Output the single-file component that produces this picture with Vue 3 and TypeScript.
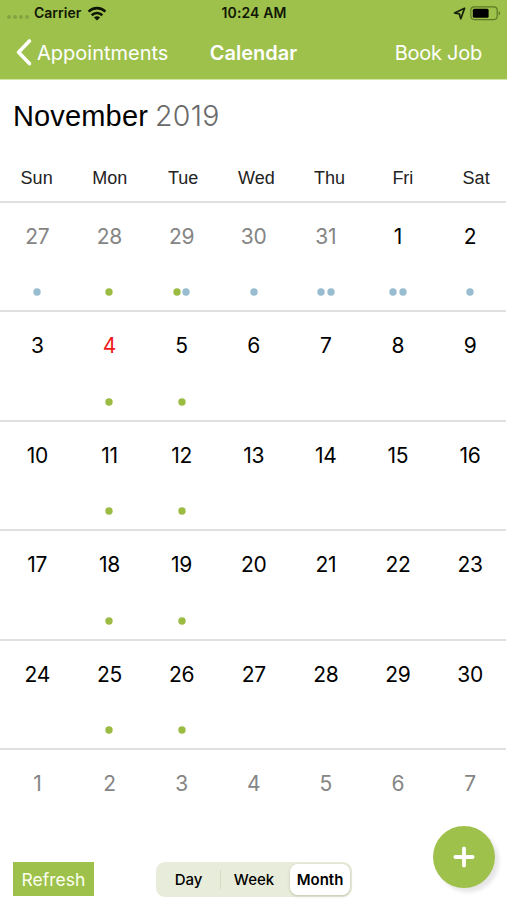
<script setup lang="ts">
interface Day {
  label: number
  tone?: 'muted' | 'today'
  dots?: Array<'green' | 'blue'>
}

const weekdays: string[] = ['Sun', 'Mon', 'Tue', 'Wed', 'Thu', 'Fri', 'Sat']

const week = (start: number): Day[] =>
  Array.from({ length: 7 }, (_, i) => ({
    label: start + i,
    tone: start + i === 4 ? 'today' : undefined,
    dots: i === 1 || i === 2 ? ['green'] : [],
  }))

const weeks: Day[][] = [
  [
    { label: 27, tone: 'muted', dots: ['blue'] },
    { label: 28, tone: 'muted', dots: ['green'] },
    { label: 29, tone: 'muted', dots: ['green', 'blue'] },
    { label: 30, tone: 'muted', dots: ['blue'] },
    { label: 31, tone: 'muted', dots: ['blue', 'blue'] },
    { label: 1, dots: ['blue', 'blue'] },
    { label: 2, dots: ['blue'] },
  ],
  week(3),
  week(10),
  week(17),
  week(24),
  [1, 2, 3, 4, 5, 6, 7].map((label): Day => ({ label, tone: 'muted' })),
]

const views: string[] = ['Day', 'Week', 'Month']
const active = 'Month'
</script>

<template>
  <main class="screen">
    <header class="top">
      <div class="status">
        <div class="carrier">
          <span class="signal"><i v-for="n in 4" :key="n" /></span>
          <span class="carrier-name">Carrier</span>
          <svg class="wifi" width="20" height="15" viewBox="0 0 20 15" fill="none" stroke="#0d1404" stroke-width="2.6">
            <path d="M1.6 5.600a12 12 0 0 1 16.800 0" />
            <path d="M4.700 9.200a7.600 7.600 0 0 1 10.600 0" />
            <path d="M10 14.600 6.900 11.500a4.400 4.400 0 0 1 6.200 0z" fill="#0d1404" stroke="none" />
          </svg>
        </div>
        <span class="time">10:24 AM</span>
        <div class="power">
          <svg width="13" height="13" viewBox="0 0 13 13" fill="none" stroke="#16200a" stroke-width="1.7" stroke-linejoin="round">
            <path d="M11.600 1.200 1.500 6l4.900.9L7.800 11.700z" />
          </svg>
          <svg width="31" height="15" viewBox="0 0 31 15">
            <rect x=".8" y=".8" width="26.400" height="12.800" rx="3.500" fill="none" stroke="#5d7a25" stroke-width="1.200" />
            <rect x="2.800" y="2.700" width="15.800" height="9" rx="1.500" fill="#000" />
            <path d="M28.600 5v4.500q1.500-.8 1.500-2.250T28.600 5" fill="#5d7a25" />
          </svg>
        </div>
      </div>
      <nav class="nav">
        <a class="back">
          <svg width="16" height="27" viewBox="0 0 16 27" fill="none" stroke="#fff" stroke-width="3.600" stroke-linecap="round" stroke-linejoin="round">
            <path d="M13.400 2 2.600 13.300l10.800 11.300" />
          </svg>
          <span class="back-label">Appointments</span>
        </a>
        <h1 class="title">Calendar</h1>
        <a class="book">Book Job</a>
      </nav>
    </header>

    <h2 class="month"><span class="name">November</span><span class="year">2019</span></h2>

    <div class="weekdays">
      <span v-for="d in weekdays" :key="d">{{ d }}</span>
    </div>

    <section class="grid">
      <div v-for="(row, r) in weeks" :key="r" class="week">
        <div v-for="day in row" :key="day.label" class="day" :class="day.tone">
          <span class="num">{{ day.label }}</span>
          <span class="dots">
            <svg v-for="(dot, k) in day.dots" :key="k" :class="dot" width="8" height="8" viewBox="0 0 8 8">
              <circle cx="4" cy="4" r="3.700" />
            </svg>
          </span>
        </div>
      </div>
    </section>

    <button class="refresh">Refresh</button>
    <div class="segments">
      <button v-for="v in views" :key="v" class="segment" :class="{ active: v === active }">{{ v }}</button>
    </div>
    <button class="fab" aria-label="Add">
      <svg width="22" height="22" viewBox="0 0 22 22" stroke="#fff" stroke-width="3.800" stroke-linecap="round">
        <path d="M11 2.400v17.200M2.400 11h17.200" />
      </svg>
    </button>
  </main>
</template>

<style>
body {
  margin: 0;
  background: #fff;
}
</style>

<style scoped>
.screen {
  position: relative;
  box-sizing: border-box;
  width: 507px;
  height: 900px;
  overflow: hidden;
  background: #fff;
  font-family: Inter, 'Liberation Sans', sans-serif;
  color: #000;
}
button {
  border: 0;
  padding: 0;
  font-family: inherit;
}
.top {
  height: 79px;
  background: #9ec14c;
  border-bottom: 1px solid #d3e6a6;
}
.status {
  display: grid;
  grid-template-columns: minmax(0, 1fr) auto minmax(0, 1fr);
  align-items: center;
  height: 26px;
  padding: 0 6px 0 7px;
}
.carrier {
  display: flex;
  align-items: center;
}
.signal {
  display: flex;
  gap: 2px;
  margin: 8px 5px 0 0;
}
.signal i {
  width: 4px;
  height: 4px;
  border-radius: 50%;
  background: #86a343;
}
.carrier-name,
.time {
  font-size: 14px;
  line-height: 24px;
  font-weight: 600;
  color: #101704;
}
.time {
  letter-spacing: 0.1px;
}
.wifi {
  margin-left: 6px;
}
.power {
  display: flex;
  justify-content: flex-end;
  align-items: center;
  gap: 4px;
}
.nav {
  display: grid;
  grid-template-columns: minmax(0, 1fr) auto minmax(0, 1fr);
  align-items: center;
  height: 53px;
  padding: 0 16px;
  color: #fff;
  font-size: 20px;
}
.back {
  display: flex;
  align-items: center;
  gap: 5px;
}
.title {
  margin: 0;
  font-size: 20px;
  font-weight: 600;
}
.book {
  justify-self: end;
  margin-right: 9px;
  letter-spacing: -0.250px;
}
.month {
  display: flex;
  align-items: baseline;
  gap: 7px;
  margin: 18px 0 0 13px;
  height: 36px;
  font: 29px/36px 'Liberation Sans', sans-serif;
}
.name {
  letter-spacing: 0.150px;
}
.year {
  font-family: Inter, sans-serif;
  font-size: 28.500px;
  font-weight: 300;
  letter-spacing: 0.300px;
  color: #6a6a6a;
}
.weekdays {
  display: grid;
  grid-template-columns: repeat(7, 73.250px);
  height: 66.500px;
  align-items: end;
  font: 18px/46px 'Liberation Sans', sans-serif;
  color: #222;
  text-align: center;
}
.week {
  display: grid;
  grid-template-columns: repeat(7, 72.150px);
  box-sizing: border-box;
  height: 109.550px;
  padding-left: 1.200px;
  border-top: 2px solid #e0e0e0;
  margin-right: 1px;
}
.day {
  display: flex;
  flex-direction: column;
  align-items: center;
}
.num {
  margin-top: 20px;
  font-size: 21px;
  line-height: 28px;
  letter-spacing: -0.300px;
}
.muted .num {
  color: #858585;
}
.today .num {
  color: #f01818;
}
.dots {
  display: flex;
  gap: 1.800px;
  margin-top: 37.500px;
}
.green {
  fill: #9cbb43;
}
.blue {
  fill: #99bdd0;
}
.refresh {
  position: absolute;
  left: 13px;
  top: 862px;
  width: 81px;
  height: 34px;
  background: #9ec14c;
  color: #fbfff0;
  font-size: 17.500px;
}
.segments {
  position: absolute;
  left: 156px;
  top: 862px;
  display: grid;
  grid-template-columns: 63px 69px 60px;
  align-items: center;
  box-sizing: border-box;
  width: 196px;
  height: 35px;
  padding: 2px;
  border-radius: 9px;
  background: #e8eddb;
}
.segment {
  height: 19px;
  background: none;
  color: #000;
  font-size: 15px;
  line-height: 19px;
  font-weight: 550;
  padding-right: 3px;
}
.segment:first-child {
  border-right: 1px solid #d5dcc4;
  padding-right: 1px;
}
.segment.active {
  height: 31px;
  padding: 0;
  border-radius: 8px;
  background: #fff;
  box-shadow: 0 1px 3px rgba(70, 80, 40, 0.25);
  font-weight: 600;
}
.fab {
  position: absolute;
  left: 433px;
  top: 826px;
  display: flex;
  align-items: center;
  justify-content: center;
  width: 62px;
  height: 62px;
  border-radius: 50%;
  background: #9ec14c;
  box-shadow: 4px 4px 4px rgba(0, 0, 0, 0.1);
}
</style>
